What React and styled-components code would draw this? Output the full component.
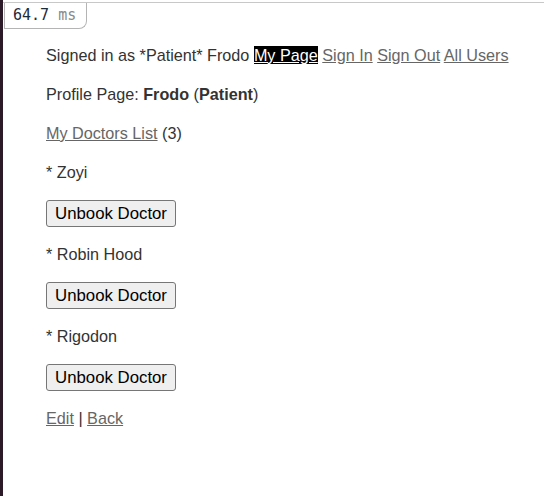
import React from "react";
import styled, { createGlobalStyle } from "styled-components";

const GlobalStyle = createGlobalStyle`
  html, body {
    margin: 0;
    padding: 0;
    background: #fff;
  }
  body {
    font-family: "Liberation Sans", Arial, sans-serif;
    font-size: 16.2px;
    color: #333;
  }
`;

const Frame = styled.div`
  display: flex;
  min-height: 496px;
`;

const Strip = styled.div`
  width: 3px;
  flex: none;
  background: #2c1a29;
`;

const Main = styled.div`
  flex: 1;
  display: flex;
  flex-direction: column;
  padding-top: 2px;
`;

const TopBar = styled.div`
  border-top: 1px solid #c8c8c8;
  height: 0;
  position: relative;
`;

const Timer = styled.div`
  position: absolute;
  top: 0;
  left: 1px;
  height: 26px;
  width: 83px;
  box-sizing: border-box;
  border: 1px solid #b4b4b4;
  border-top: none;
  border-radius: 0 0 8px 0;
  background: #fff;
  font-family: "DejaVu Sans Mono", monospace;
  font-size: 15px;
  line-height: 24px;
  padding-left: 8px;
  color: #1d2a3a;
`;

const Unit = styled.span`
  color: #8a8a8a;
`;

const Content = styled.div`
  padding: 41px 0 0 43px;
  line-height: 23px;
`;

const Para = styled.p`
  margin: 0 0 16px;
`;

const Link = styled.a`
  color: ${({ $active }) => ($active ? "#fff" : "#666")};
  background: ${({ $active }) => ($active ? "#000" : "transparent")};
  text-decoration: underline;
  cursor: pointer;
`;

const Form = styled.form`
  margin: 0 0 16px;
`;

const Button = styled.button`
  font-family: "Liberation Sans", Arial, sans-serif;
  font-size: 16.8px;
  color: #000;
  background: #efefef;
  border: 1px solid #767676;
  border-radius: 3px;
  height: 27px;
  padding: 0;
  width: 130px;
  line-height: 23px;
`;

const doctors = ["Zoyi", "Robin Hood", "Rigodon"];

export default function App() {
  return (
    <>
      <GlobalStyle />
      <Frame>
        <Strip />
        <Main>
          <TopBar>
            <Timer>
              64.7 <Unit>ms</Unit>
            </Timer>
          </TopBar>
          <Content>
            <Para>
              Signed in as *Patient* Frodo <Link $active>My Page</Link>{" "}
              <Link>Sign In</Link> <Link>Sign Out</Link> <Link>All Users</Link>
            </Para>
            <Para>
              Profile Page: <b>Frodo</b> (<b>Patient</b>)
            </Para>
            <Para>
              <Link>My Doctors List</Link> (3)
            </Para>
            {doctors.map((name) => (
              <React.Fragment key={name}>
                <Para>* {name}</Para>
                <Form onSubmit={(e) => e.preventDefault()}>
                  <Button type="button">Unbook Doctor</Button>
                </Form>
              </React.Fragment>
            ))}
            <Para>
              <Link>Edit</Link> | <Link>Back</Link>
            </Para>
          </Content>
        </Main>
      </Frame>
    </>
  );
}
